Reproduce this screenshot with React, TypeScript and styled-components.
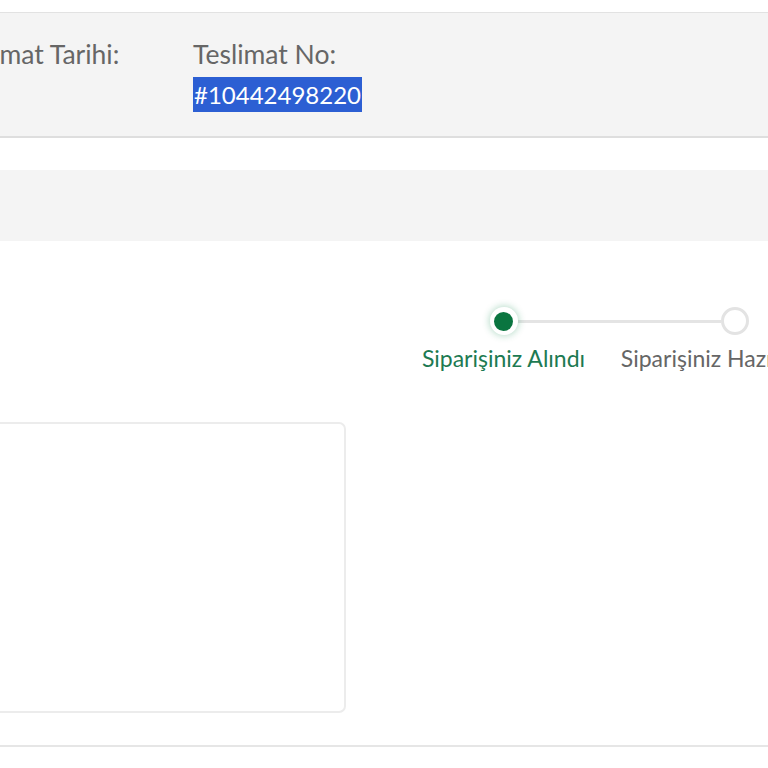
import React from "react";
import styled, { createGlobalStyle } from "styled-components";

const Global = createGlobalStyle`
  html, body { margin: 0; padding: 0; background: #fff; }
  body { overflow: hidden; font-family: "Lato", "Noto Sans", sans-serif; }
`;

const Page = styled.div`
  width: 768px;
  height: 768px;
  overflow: hidden;
  padding-top: 12px;
  box-sizing: border-box;
`;

const InfoBar = styled.div`
  height: 126px;
  box-sizing: border-box;
  background: #f4f4f4;
  border-top: 1px solid #e2e2e2;
  border-bottom: 2px solid #dedede;
  display: flex;
  gap: 44px;
  padding-top: 24px;
  margin-left: -51px;
`;

const InfoItem = styled.div<{ w: number }>`
  display: flex;
  flex-direction: column;
  width: ${(p) => p.w}px;
`;

const Label = styled.div`
  font-size: 26.5px;
  line-height: 34px;
  color: #666;
  white-space: nowrap;
`;

const Value = styled.div`
  margin-top: 6px;
  font-size: 24px;
  line-height: 35px;
  white-space: nowrap;
`;

const Selected = styled.span`
  display: inline-block;
  background: #2c5fd3;
  color: #fff;
  line-height: 35px;
  padding: 0 1px;
`;

const Band = styled.div`
  margin-top: 32px;
  height: 71px;
  background: #f4f4f4;
`;

const Stepper = styled.div`
  display: flex;
  margin-top: 66px;
  margin-left: 388px;
`;

const Step = styled.div<{ last?: boolean }>`
  position: relative;
  width: 231px;
  flex: none;
  display: flex;
  flex-direction: column;
  align-items: center;
  &::after {
    content: "";
    display: ${(p) => (p.last ? "none" : "block")};
    position: absolute;
    top: 13px;
    left: 130px;
    width: 203px;
    height: 3px;
    background: #e4e4e4;
  }
`;

const Dot = styled.div<{ active?: boolean }>`
  position: relative;
  z-index: 1;
  width: 28px;
  height: 28px;
  box-sizing: border-box;
  border-radius: 50%;
  background: #fff;
  border: ${(p) => (p.active ? "none" : "3px solid #e3e3e3")};
  box-shadow: ${(p) => (p.active ? "0 0 7px 1px rgba(20, 140, 80, 0.3)" : "none")};
  display: flex;
  align-items: center;
  justify-content: center;
  &::before {
    content: "";
    display: ${(p) => (p.active ? "block" : "none")};
    width: 19px;
    height: 19px;
    border-radius: 50%;
    background: #0a7540;
  }
`;

const StepLabel = styled.div<{ active?: boolean }>`
  margin-top: 9px;
  font-size: 23px;
  line-height: 28px;
  white-space: nowrap;
  color: ${(p) => (p.active ? "#1d7a52" : "#666")};
`;

const Card = styled.div`
  margin-top: 50px;
  margin-left: -20px;
  width: 366px;
  height: 291px;
  box-sizing: border-box;
  border: 2px solid #ececec;
  border-radius: 7px;
`;

const Divider = styled.div`
  margin-top: 32px;
  height: 2px;
  background: #e6e6e6;
`;

export default function App() {
  return (
    <Page>
      <Global />
      <InfoBar>
        <InfoItem w={200}>
          <Label>Teslimat Tarihi:</Label>
        </InfoItem>
        <InfoItem w={200}>
          <Label>Teslimat No:</Label>
          <Value>
            <Selected>#10442498220</Selected>
          </Value>
        </InfoItem>
      </InfoBar>
      <Band />
      <Stepper>
        <Step>
          <Dot active />
          <StepLabel active>Siparişiniz Alındı</StepLabel>
        </Step>
        <Step last>
          <Dot />
          <StepLabel>Siparişiniz Hazırlanıyor</StepLabel>
        </Step>
      </Stepper>
      <Card />
      <Divider />
    </Page>
  );
}
